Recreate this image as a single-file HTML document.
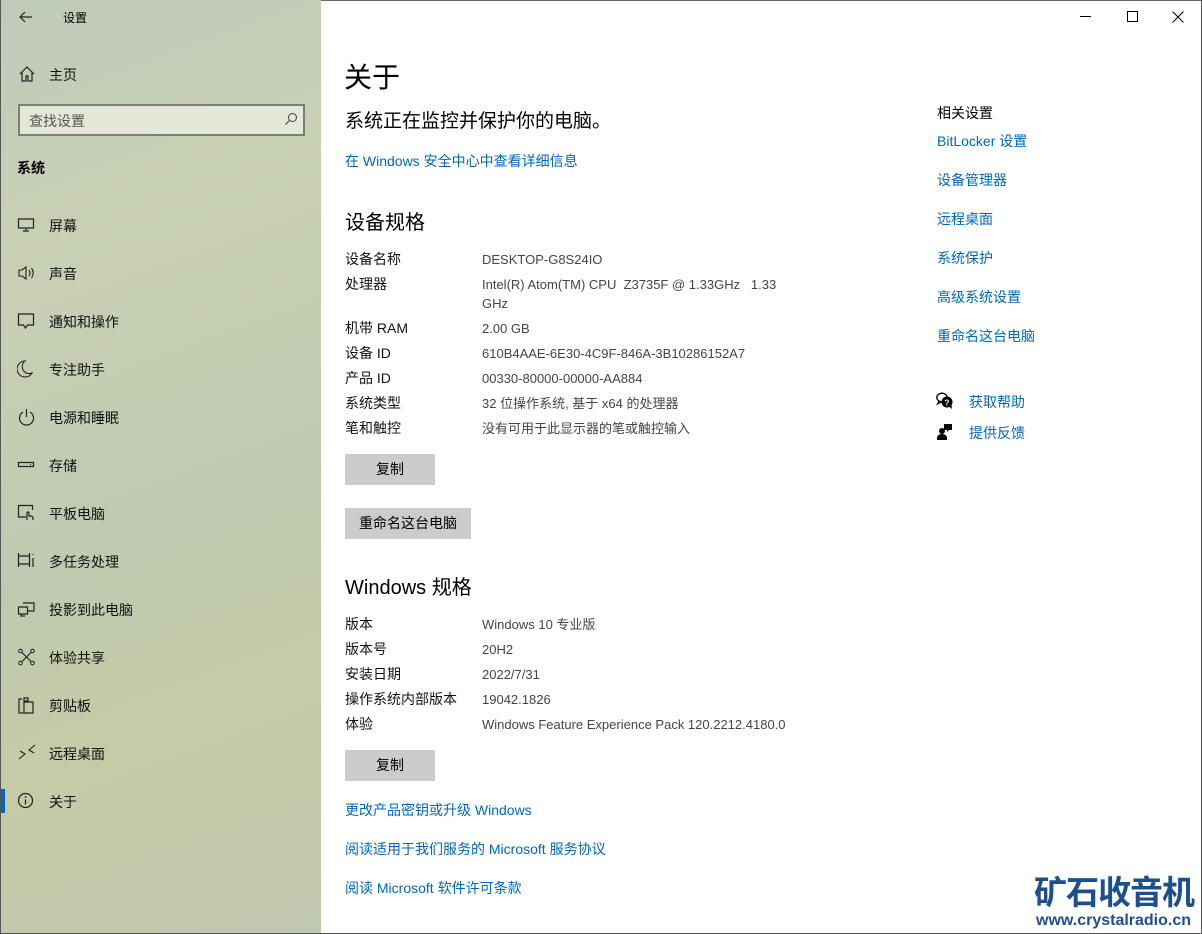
<!DOCTYPE html>
<html><head><meta charset="utf-8"><style>
*{margin:0;padding:0;box-sizing:border-box}
body{width:1202px;height:934px;position:relative;overflow:hidden;font-family:"Liberation Sans","Microsoft YaHei","Noto Sans CJK SC",sans-serif;background:#fff;color:#000}
.side{position:absolute;left:0;top:0;width:321px;height:934px;background:linear-gradient(160deg,#bfcab9 0%,#c9d0b4 25%,#c0c9b1 55%,#c4cba6 75%,#c1c8b0 100%);border-left:1px solid #555;border-bottom:1px solid #555}
.t{position:absolute;white-space:nowrap}
.si{position:absolute;left:48px;font-size:14px;color:#111}
.ic{position:absolute;left:16px;width:20px;height:20px}
.lab{position:absolute;left:345px;font-size:14px;color:#111;line-height:20px}
.val{position:absolute;left:482px;font-size:13px;color:#444;line-height:20px;margin-top:1px}
.lnk{position:absolute;font-size:14px;color:#0067b8}
.btn{position:absolute;left:345px;height:31px;background:#ccc;font-size:14px;color:#000;text-align:center;line-height:31px}
.frame{position:absolute;right:0;top:0;width:1px;height:934px;background:#555}
</style></head><body>
<div class="side">
<svg class="t" style="left:17px;top:9px" width="16" height="16" viewBox="0 0 16 16"><path d="M14 8H2M7 3L2 8l5 5" fill="none" stroke="#222" stroke-width="1.2"/></svg>
<div class="t" style="left:62px;top:9px;font-size:12px">设置</div>
<svg class="ic" style="top:64px" viewBox="0 0 20 20"><path d="M3 10L10 3l7 7M5 8v9h4v-5h2v5h4V8" fill="none" stroke="#222" stroke-width="1.2"/></svg>
<div class="si" style="top:65px">主页</div>
<div class="t" style="left:17px;top:104px;width:287px;height:32px;border:2px solid #7a8070;background:rgba(235,238,225,0.8)"></div>
<div class="t" style="left:28px;top:111px;font-size:14px;color:#555">查找设置</div>
<svg class="t" style="left:283px;top:112px" width="14" height="14" viewBox="0 0 14 14"><circle cx="8.5" cy="5.5" r="4" fill="none" stroke="#444" stroke-width="1"/><path d="M5.5 8.5L1.5 12.5" stroke="#444" stroke-width="1.2"/></svg>
<div class="t" style="left:16px;top:158px;font-size:14px;font-weight:bold">系统</div>

<svg class="ic" style="top:215px" viewBox="0 0 20 20"><path d="M1.5 4h15v9h-15zM9 13v3M6 16h6" fill="none" stroke="#222" stroke-width="1.2"/></svg>
<div class="si" style="top:216px">屏幕</div>
<svg class="ic" style="top:263px" viewBox="0 0 20 20"><path d="M2 7h3l4-3v12l-4-3H2z" fill="none" stroke="#222" stroke-width="1.1"/><path d="M12 7q2 3 0 6M14.5 5q3.5 5 0 10" fill="none" stroke="#222" stroke-width="1.1"/></svg>
<div class="si" style="top:264px">声音</div>
<svg class="ic" style="top:311px" viewBox="0 0 20 20"><path d="M1.5 3h15v11h-6l-2 3-2-3h-5z" fill="none" stroke="#222" stroke-width="1.2"/></svg>
<div class="si" style="top:312px">通知和操作</div>
<svg class="ic" style="top:359px" viewBox="0 0 20 20"><path d="M8 2a8 8 0 1 0 7 12A7 7 0 0 1 8 2z" fill="none" stroke="#222" stroke-width="1.1"/></svg>
<div class="si" style="top:360px">专注助手</div>
<svg class="ic" style="top:407px" viewBox="0 0 20 20"><path d="M6 5a7 7 0 1 0 7 0M9.5 2v8" fill="none" stroke="#222" stroke-width="1.2"/></svg>
<div class="si" style="top:408px">电源和睡眠</div>
<svg class="ic" style="top:455px" viewBox="0 0 20 20"><path d="M1.5 7.5h15v4h-15zM13 9.5h1" fill="none" stroke="#222" stroke-width="1.2"/></svg>
<div class="si" style="top:456px">存储</div>
<svg class="ic" style="top:503px" viewBox="0 0 20 20"><path d="M9 14H1.5V2.5h14V7M10 17v-7a1 1 0 0 1 2 0v3h2a2 2 0 0 1 2 2v2" fill="none" stroke="#222" stroke-width="1.2"/></svg>
<div class="si" style="top:504px">平板电脑</div>
<svg class="ic" style="top:551px" viewBox="0 0 20 20"><path d="M1.5 2v14M12.5 2v14M1.5 5h11M1.5 13h11M16 3v1M16 7v9" fill="none" stroke="#222" stroke-width="1.2"/></svg>
<div class="si" style="top:552px">多任务处理</div>
<svg class="ic" style="top:599px" viewBox="0 0 20 20"><path d="M6 4h11v8H11M1.5 8h9v7h-9zM4 15v2h4" fill="none" stroke="#222" stroke-width="1.2"/></svg>
<div class="si" style="top:600px">投影到此电脑</div>
<svg class="ic" style="top:647px" viewBox="0 0 20 20"><circle cx="3.5" cy="4" r="1.8" fill="none" stroke="#222"/><circle cx="15.5" cy="4" r="1.8" fill="none" stroke="#222"/><circle cx="3.5" cy="16" r="1.8" fill="none" stroke="#222"/><circle cx="15.5" cy="16" r="1.8" fill="none" stroke="#222"/><path d="M5 5.5l9 9M14 5.5l-9 9" stroke="#222" stroke-width="1.1"/></svg>
<div class="si" style="top:648px">体验共享</div>
<svg class="ic" style="top:695px" viewBox="0 0 20 20"><path d="M5 4H2v14h8M7 3h4v3H7zM7 7h9v11H7z" fill="none" stroke="#222" stroke-width="1.2"/></svg>
<div class="si" style="top:696px">剪贴板</div>
<svg class="ic" style="top:743px" viewBox="0 0 20 20"><path d="M3 8l5 3-6 5M18 2l-6 5 5 3" fill="none" stroke="#222" stroke-width="1.1"/></svg>
<div class="si" style="top:744px">远程桌面</div>
<div class="t" style="left:0;top:789px;width:4px;height:24px;background:#0067c0"></div>
<svg class="ic" style="top:791px" viewBox="0 0 20 20"><circle cx="8.5" cy="9.5" r="7" fill="none" stroke="#222" stroke-width="1.2"/><path d="M8.5 8.5v5" stroke="#222" stroke-width="1.3"/><circle cx="8.5" cy="6" r=".9" fill="#222"/></svg>
<div class="si" style="top:792px">关于</div>
</div>
<div class="t" style="left:321px;top:0;width:881px;height:1px;background:#666"></div>
<div class="t" style="left:321px;top:933px;width:881px;height:1px;background:#555"></div>
<div class="frame"></div>

<div class="t" style="left:1080px;top:16px;width:11px;height:1px;background:#000"></div>
<div class="t" style="left:1127px;top:11px;width:11px;height:11px;border:1px solid #000"></div>
<svg class="t" style="left:1172px;top:11px" width="12" height="12" viewBox="0 0 12 12"><path d="M0.5 0.5l11 11M11.5 0.5l-11 11" stroke="#000" stroke-width="1"/></svg>

<div class="t" style="left:344px;top:56px;font-size:28px">关于</div>
<div class="t" style="left:345px;top:106px;font-size:19px">系统正在监控并保护你的电脑。</div>
<div class="lnk" style="left:345px;top:151px">在 Windows 安全中心中查看详细信息</div>
<div class="t" style="left:345px;top:206px;font-size:20px">设备规格</div>

<div class="lab" style="top:249px">设备名称</div><div class="val" style="top:249px">DESKTOP-G8S24IO</div>
<div class="lab" style="top:274px">处理器</div><div class="val" style="top:274px;line-height:19px">Intel(R) Atom(TM) CPU&nbsp; Z3735F @ 1.33GHz &nbsp; 1.33<br>GHz</div>
<div class="lab" style="top:318px">机带 RAM</div><div class="val" style="top:318px">2.00 GB</div>
<div class="lab" style="top:343px">设备 ID</div><div class="val" style="top:343px">610B4AAE-6E30-4C9F-846A-3B10286152A7</div>
<div class="lab" style="top:368px">产品 ID</div><div class="val" style="top:368px">00330-80000-00000-AA884</div>
<div class="lab" style="top:393px">系统类型</div><div class="val" style="top:393px">32 位操作系统, 基于 x64 的处理器</div>
<div class="lab" style="top:418px">笔和触控</div><div class="val" style="top:418px">没有可用于此显示器的笔或触控输入</div>
<div class="btn" style="top:454px;width:90px">复制</div>
<div class="btn" style="top:508px;width:126px">重命名这台电脑</div>

<div class="t" style="left:345px;top:571px;font-size:20px">Windows 规格</div>
<div class="lab" style="top:614px">版本</div><div class="val" style="top:614px">Windows 10 专业版</div>
<div class="lab" style="top:639px">版本号</div><div class="val" style="top:639px">20H2</div>
<div class="lab" style="top:664px">安装日期</div><div class="val" style="top:664px">2022/7/31</div>
<div class="lab" style="top:689px">操作系统内部版本</div><div class="val" style="top:689px">19042.1826</div>
<div class="lab" style="top:714px">体验</div><div class="val" style="top:714px">Windows Feature Experience Pack 120.2212.4180.0</div>
<div class="btn" style="top:750px;width:90px">复制</div>
<div class="lnk" style="left:345px;top:800px">更改产品密钥或升级 Windows</div>
<div class="lnk" style="left:345px;top:839px">阅读适用于我们服务的 Microsoft 服务协议</div>
<div class="lnk" style="left:345px;top:878px">阅读 Microsoft 软件许可条款</div>

<div class="t" style="left:937px;top:103px;font-size:14px">相关设置</div>
<div class="lnk" style="left:937px;top:131px">BitLocker 设置</div>
<div class="lnk" style="left:937px;top:170px">设备管理器</div>
<div class="lnk" style="left:937px;top:209px">远程桌面</div>
<div class="lnk" style="left:937px;top:248px">系统保护</div>
<div class="lnk" style="left:937px;top:287px">高级系统设置</div>
<div class="lnk" style="left:937px;top:326px">重命名这台电脑</div>
<svg class="t" style="left:936px;top:392px" width="18" height="18" viewBox="0 0 18 18"><ellipse cx="6" cy="5.5" rx="5.2" ry="4.3" fill="none" stroke="#000" stroke-width="1.3"/><path d="M3 9l-1.5 3 4-2" fill="none" stroke="#000" stroke-width="1.2"/><circle cx="11" cy="10" r="5.5" fill="#000"/><path d="M13 14.5l3 2.5-0.5-4z" fill="#000"/><text x="8.3" y="13.3" font-size="8.5" fill="#fff" font-family="Liberation Sans" font-weight="bold">?</text></svg>
<div class="lnk" style="left:969px;top:392px">获取帮助</div>
<svg class="t" style="left:937px;top:423px" width="16" height="17" viewBox="0 0 16 17"><circle cx="5" cy="8" r="3" fill="#000"/><path d="M0 17v-2a5 4 0 0 1 10 0v2z" fill="#000"/><path d="M7 1h8v6h-3l-2 2V7H7z" fill="#000"/></svg>
<div class="lnk" style="left:969px;top:423px">提供反馈</div>

<div class="t" style="left:1034px;top:870px;font-size:33px;font-weight:bold;color:#1d4f8e;letter-spacing:-1px;font-family:'Noto Sans CJK SC',sans-serif;line-height:40px">矿石收音机</div>
<div class="t" style="left:1036px;top:911px;font-size:16px;font-weight:bold;color:#1d4f8e;line-height:20px">www.crystalradio.cn</div>
</body></html>
